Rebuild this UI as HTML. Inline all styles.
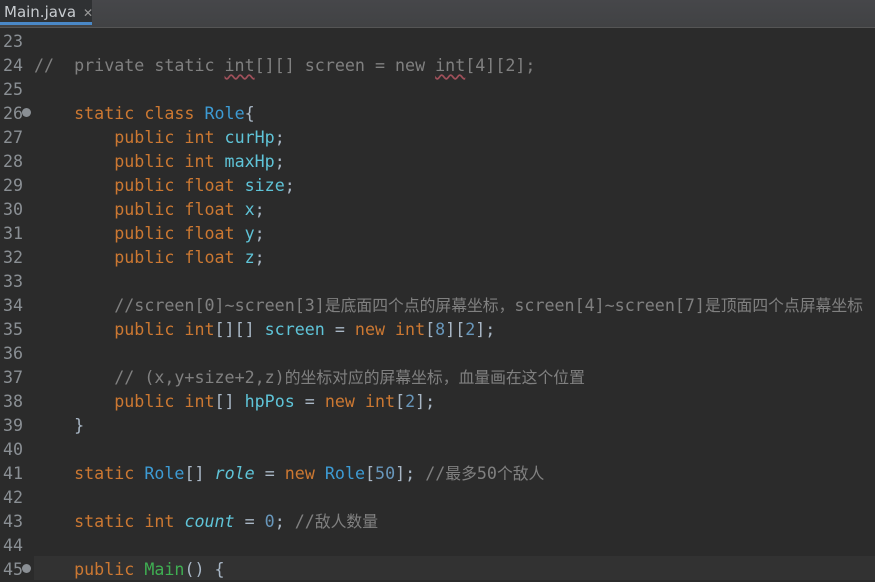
<!DOCTYPE html>
<html><head><meta charset="utf-8"><style>
body{margin:0;width:875px;height:579px;overflow:hidden;background:#2b2b2b;}
#bar{position:absolute;left:0;top:0;width:875px;height:27px;background:linear-gradient(#46474a,#414244);border-bottom:1px solid #555;}
#tab{position:absolute;left:0;top:0;width:92px;height:25px;background:#2f3133;border-bottom:3px solid #4a88c7;font:15px "DejaVu Sans","Liberation Sans",sans-serif;color:#c8ccd0;line-height:24px;padding-left:4px;box-sizing:border-box;}
#tab span{color:#999;margin-left:7px;font-size:12px}
.l{position:absolute;left:0;height:24px;width:875px;font:16.67px/24px "DejaVu Sans Mono","Liberation Mono","Noto Sans CJK SC",monospace;color:#a9b7c6;white-space:pre;}
.l>span{position:absolute;top:2px}
.n{left:3px;color:#8a8f94;}
.c{left:34px;}
.z{font-size:15.8px}
.k{color:#cc7832}.t{color:#3d9bd4}.f{color:#5fc4d8}.m{color:#808080}.d{color:#6897bb}.g{color:#3fae52}.i{font-style:italic;color:#5fc4d8}
.w{text-decoration:underline wavy #a0505a;text-underline-offset:3px}
.dot{position:absolute;left:22px;top:8px;width:9px;height:9px;border-radius:50%;background:#8a8f94}
</style></head><body>
<div id="bar"></div><div id="tab">Main.java<span>✕</span></div>
<div class="l" style="top:28px"><span class="n">23</span></div>
<div class="l" style="top:52px"><span class="n">24</span><span class="c m">//  private static <span class="w">int</span>[][] screen = new <span class="w">int</span>[4][2];</span></div>
<div class="l" style="top:76px"><span class="n">25</span></div>
<div class="l" style="top:100px"><span class="n">26</span><i class="dot"></i><span class="c">    <span class="k">static class </span><span class="t">Role</span>{</span></div>
<div class="l" style="top:124px"><span class="n">27</span><span class="c">        <span class="k">public int </span><span class="f">curHp</span>;</span></div>
<div class="l" style="top:148px"><span class="n">28</span><span class="c">        <span class="k">public int </span><span class="f">maxHp</span>;</span></div>
<div class="l" style="top:172px"><span class="n">29</span><span class="c">        <span class="k">public float </span><span class="f">size</span>;</span></div>
<div class="l" style="top:196px"><span class="n">30</span><span class="c">        <span class="k">public float </span><span class="f">x</span>;</span></div>
<div class="l" style="top:220px"><span class="n">31</span><span class="c">        <span class="k">public float </span><span class="f">y</span>;</span></div>
<div class="l" style="top:244px"><span class="n">32</span><span class="c">        <span class="k">public float </span><span class="f">z</span>;</span></div>
<div class="l" style="top:268px"><span class="n">33</span></div>
<div class="l" style="top:292px"><span class="n">34</span><span class="c">        <span class="m">//screen[0]~screen[3]<span class="z">是底面四个点的屏幕坐标，</span>screen[4]~screen[7]<span class="z">是顶面四个点屏幕坐标</span></span></span></div>
<div class="l" style="top:316px"><span class="n">35</span><span class="c">        <span class="k">public int</span>[][] <span class="f">screen</span> = <span class="k">new int</span>[<span class="d">8</span>][<span class="d">2</span>];</span></div>
<div class="l" style="top:340px"><span class="n">36</span></div>
<div class="l" style="top:364px"><span class="n">37</span><span class="c">        <span class="m">// (x,y+size+2,z)<span class="z">的坐标对应的屏幕坐标，血量画在这个位置</span></span></span></div>
<div class="l" style="top:388px"><span class="n">38</span><span class="c">        <span class="k">public int</span>[] <span class="f">hpPos</span> = <span class="k">new int</span>[<span class="d">2</span>];</span></div>
<div class="l" style="top:412px"><span class="n">39</span><span class="c">    }</span></div>
<div class="l" style="top:436px"><span class="n">40</span></div>
<div class="l" style="top:460px"><span class="n">41</span><span class="c">    <span class="k">static </span><span class="t">Role</span>[] <span class="i">role</span> = <span class="k">new </span><span class="t">Role</span>[<span class="d">50</span>]; <span class="m">//<span class="z">最多</span>50<span class="z">个敌人</span></span></span></div>
<div class="l" style="top:484px"><span class="n">42</span></div>
<div class="l" style="top:508px"><span class="n">43</span><span class="c">    <span class="k">static int </span><span class="i">count</span> = <span class="d">0</span>; <span class="m">//<span class="z">敌人数量</span></span></span></div>
<div class="l" style="top:532px"><span class="n">44</span></div>
<div class="l" style="top:556px;"><div style="position:absolute;left:34px;top:0;right:0;height:24px;background:#323232"></div><span class="n">45</span><i class="dot"></i><span class="c">    <span class="k">public </span><span class="g">Main</span>() {</span></div>
</body></html>
